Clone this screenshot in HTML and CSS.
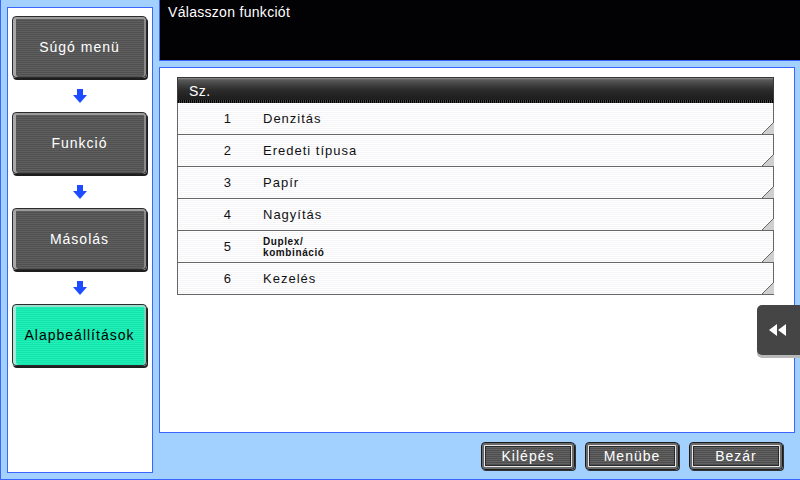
FILE: index.html
```html
<!DOCTYPE html>
<html lang="hu">
<head>
<meta charset="utf-8">
<link rel="stylesheet" href="styles.css">
</head>
<body>
<div class="screen">
  <aside class="nav">
    <div class="nav-btn">Súgó menü</div>
    <div class="arrow"><svg width="14" height="14" viewBox="0 0 14 14"><path d="M4 0h6v6h4l-7 8-7-8h4z" fill="#1d4cff"/></svg></div>
    <div class="nav-btn">Funkció</div>
    <div class="arrow"><svg width="14" height="14" viewBox="0 0 14 14"><path d="M4 0h6v6h4l-7 8-7-8h4z" fill="#1d4cff"/></svg></div>
    <div class="nav-btn">Másolás</div>
    <div class="arrow"><svg width="14" height="14" viewBox="0 0 14 14"><path d="M4 0h6v6h4l-7 8-7-8h4z" fill="#1d4cff"/></svg></div>
    <div class="nav-btn active">Alapbeállítások</div>
  </aside>
  <header class="title">Válasszon funkciót</header>
  <main class="content">
    <div class="table">
      <div class="thead">Sz.</div>
      <div class="row"><span class="num">1</span><span class="label">Denzitás</span></div>
      <div class="row"><span class="num">2</span><span class="label">Eredeti típusa</span></div>
      <div class="row"><span class="num">3</span><span class="label">Papír</span></div>
      <div class="row"><span class="num">4</span><span class="label">Nagyítás</span></div>
      <div class="row"><span class="num">5</span><span class="label small">Duplex/<br>kombináció</span></div>
      <div class="row"><span class="num">6</span><span class="label">Kezelés</span></div>
    </div>
  </main>
  <footer class="actions">
    <div class="act-btn">Kilépés</div>
    <div class="act-btn">Menübe</div>
    <div class="act-btn">Bezár</div>
  </footer>
  <div class="side-tab"><svg width="18" height="12" viewBox="0 0 18 12"><path d="M0 6l8-6v12zM9 6l8-6v12z" fill="#fff"/></svg></div>
</div>
</body>
</html>
```
FILE: styles.css
```css
* { box-sizing: border-box; }
html, body { margin: 0; padding: 0; }
body {
  width: 800px;
  height: 480px;
  overflow: hidden;
  font-family: "Liberation Sans", Arial, sans-serif;
}
.screen {
  position: relative;
  width: 800px;
  height: 480px;
  background: #a2d0ff;
  border-left: 1px solid #3a66ff;
  border-bottom: 1px solid #3a66ff;
  display: grid;
  grid-template-columns: 158px 1fr;
  grid-template-rows: 61px 1fr 46px;
}
.nav {
  grid-column: 1;
  grid-row: 1 / 4;
  margin: 7px 6px 6px 6px;
  background: #fff;
  border: 1px solid #3a66ff;
  padding: 8px 5px 0 4px;
  display: flex;
  flex-direction: column;
}
.nav-btn {
  height: 62px;
  flex: none;
  display: flex;
  align-items: center;
  justify-content: center;
  color: #fff;
  font-size: 14px;
  letter-spacing: 1px;
  border: 1px solid #2c2c2c;
  border-radius: 4px;
  background: repeating-linear-gradient(to bottom, #5f5f5f 0 1px, #505050 1px 2px);
  box-shadow: inset 3px 0 0 #a8a8a8, inset 0 2px 0 #9a9a9a, inset -2px 0 0 #8a8a8a, 1px 2px 0 #1e1e1e;
}
.nav-btn.active {
  color: #000;
  background: repeating-linear-gradient(to bottom, #1ef0b8 0 1px, #17e3ac 1px 2px);
  box-shadow: inset 3px 0 0 #a9e8d8, inset 0 2px 0 #9adfcc, inset -2px 0 0 #7fcfb8, 1px 2px 0 #1e1e1e;
}
.arrow {
  height: 34px;
  display: flex;
  align-items: center;
  justify-content: center;
  padding-top: 2px;
}
.title {
  grid-column: 2;
  grid-row: 1;
  background: #020104;
  border-left: 1px solid #3a66ff;
  border-bottom: 1px solid #3a66ff;
  color: #fff;
  font-size: 14px;
  letter-spacing: 0.3px;
  padding: 3px 8px;
  line-height: 18px;
}
.content {
  grid-column: 2;
  grid-row: 2;
  margin: 6px 5px 0 0;
  background: #fff;
  border: 1px solid #3a66ff;
  padding: 9px 20px 0 17px;
}
.table {
  width: 597px;
}
.thead {
  height: 26px;
  color: #fff;
  font-size: 14px;
  letter-spacing: 0.5px;
  padding: 5px 0 0 11px;
  border: 1px solid #3a3a3a;
  border-bottom: none;
  background:
    repeating-linear-gradient(to right, #000 0 1px, #444 1px 2px) bottom / 100% 3px no-repeat,
    linear-gradient(to bottom, #8a8a8a 0, #5a5a5a 2px, #4a4a4a 5px, #3c3c3c 8px, #2c2c2c 12px, #222 18px, #1c1c1c 26px);
}
.row {
  position: relative;
  height: 32px;
  display: flex;
  align-items: center;
  border: 1px solid #666;
  border-top: none;
  background: repeating-linear-gradient(to bottom, #fff 0 1px, #f5f5f8 1px 2px);
  font-size: 13px;
  letter-spacing: 1px;
  color: #111;
}
.row::after {
  content: "";
  position: absolute;
  right: -1px;
  bottom: 0;
  width: 12px;
  height: 12px;
  background: linear-gradient(to bottom right, transparent calc(50% - 0.5px), #666 calc(50% - 0.5px), #666 calc(50% + 0.5px), #cfcfcf calc(50% + 0.5px));
}
.num {
  width: 54px;
  text-align: right;
}
.label {
  margin-left: 31px;
}
.label.small {
  font-size: 10px;
  font-weight: bold;
  line-height: 11px;
  letter-spacing: 0.6px;
  padding-top: 1px;
}
.actions {
  grid-column: 2;
  grid-row: 3;
  display: flex;
  justify-content: flex-end;
  align-items: flex-start;
  gap: 10px;
  padding: 9px 17px 0 0;
}
.act-btn {
  width: 94px;
  height: 28px;
  display: flex;
  align-items: center;
  justify-content: center;
  color: #fff;
  font-size: 14px;
  letter-spacing: 1px;
  border: 1px solid #1a1a1a;
  border-radius: 4px;
  background: repeating-linear-gradient(to bottom, #626262 0 1px, #4e4e4e 1px 2px);
  box-shadow: inset 0 0 0 2px #6a6a6a, inset 0 0 0 3px #e8e8e8, inset 0 0 0 4px #2a2a2a, 1px 1px 0 #333;
}
.side-tab {
  position: absolute;
  left: 756px;
  top: 305px;
  width: 44px;
  height: 50px;
  background: #454545;
  border-radius: 5px 0 0 5px;
  box-shadow: 0 3px 0 #b8b8b8;
  display: flex;
  align-items: center;
  justify-content: center;
  padding-right: 2px;
}
```
